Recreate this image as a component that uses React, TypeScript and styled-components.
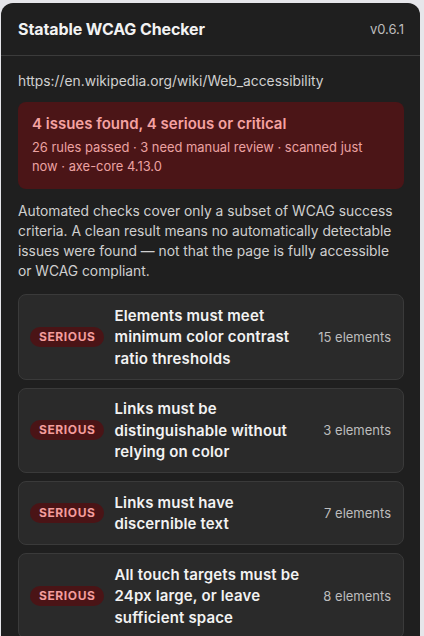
import React from 'react';
import styled, { createGlobalStyle } from 'styled-components';

interface IIssue {
  id: string;
  impact: string;
  title: string;
  count: number;
}

const issues: IIssue[] = [
  { id: 'color-contrast', impact: 'serious', title: 'Elements must meet minimum color contrast ratio thresholds', count: 15 },
  { id: 'link-in-text-block', impact: 'serious', title: 'Links must be distinguishable without relying on color', count: 3 },
  { id: 'link-name', impact: 'serious', title: 'Links must have discernible text', count: 7 },
  { id: 'target-size', impact: 'serious', title: 'All touch targets must be 24px large, or leave sufficient space', count: 8 },
];

const GlobalStyle = createGlobalStyle`
  html, body {
    margin: 0;
    background: #e6e6ea;
  }
  body {
    padding: 3px 4px 0 1px;
    font-family: Inter, "Noto Sans", "Liberation Sans", sans-serif;
    -webkit-font-smoothing: antialiased;
  }
`;

const Panel = styled.div`
  width: 419px;
  min-height: 660px;
  box-sizing: border-box;
  background: #1f1f1f;
  border-radius: 12px 12px 0 0;
  color: #f2f2f2;
  overflow: hidden;
`;

const Header = styled.header`
  display: flex;
  justify-content: space-between;
  align-items: center;
  height: 53px;
  padding: 0 16px 0 17px;
  border-bottom: 1px solid #3b3b3b;
  box-sizing: border-box;

  h1 {
    margin: 0;
    font-size: 16px;
    font-weight: 700;
    letter-spacing: -0.1px;
  }
`;

const Version = styled.span`
  font-size: 13px;
  color: #bdbdbd;
`;

const Body = styled.main`
  display: flex;
  flex-direction: column;
  gap: 12px;
  padding: 16px 16px 0 17px;
`;

const Url = styled.div`
  font-size: 13.8px;
  line-height: 18px;
  color: #d0d0d0;
`;

const Summary = styled.section`
  background: #4b1517;
  border-radius: 8px;
  padding: 12px 14px 13px 14px;

  .summary-title {
    font-size: 15px;
    font-weight: 600;
    line-height: 20px;
    color: #f5a2a2;
    margin-bottom: 4px;
  }

  .summary-meta {
    font-size: 12.9px;
    line-height: 19px;
    color: #eba2a2;
  }
`;

const Disclaimer = styled.p`
  margin: 0;
  font-size: 13.8px;
  line-height: 20px;
  color: #cfcfcf;
`;

const IssueList = styled.div`
  display: flex;
  flex-direction: column;
  gap: 8px;
  margin-top: 1px;
`;

const IssueCard = styled.div`
  display: flex;
  align-items: center;
  gap: 10px;
  padding: 9.5px 12px 9.5px 11px;
  background: #2a2a2a;
  border: 1px solid #3a3a3a;
  border-radius: 8px;
`;

const Badge = styled.span<{ $impact: string }>`
  flex-shrink: 0;
  padding: 0 9px;
  height: 20px;
  line-height: 20px;
  border-radius: 10px;
  background: ${({ $impact }) => ($impact === 'critical' ? '#5a1010' : '#4a1416')};
  color: #f49d9d;
  font-size: 12px;
  font-weight: 700;
  letter-spacing: 0.6px;
  text-transform: uppercase;
`;

const IssueTitle = styled.div`
  flex: 1;
  font-size: 15px;
  font-weight: 600;
  letter-spacing: 0.15px;
  line-height: 21.5px;
  color: #f2f2f2;
`;

const Count = styled.span`
  flex-shrink: 0;
  font-size: 13px;
  color: #bdbdbd;
`;

export default function App() {
  return (
    <>
      <GlobalStyle />
      <Panel>
        <Header>
          <h1>Statable WCAG Checker</h1>
          <Version>v0.6.1</Version>
        </Header>
        <Body>
          <Url>https://en.wikipedia.org/wiki/Web_accessibility</Url>
          <Summary>
            <div className="summary-title">4 issues found, 4 serious or critical</div>
            <div className="summary-meta">
              26 rules passed · 3 need manual review · scanned just now · axe-core 4.13.0
            </div>
          </Summary>
          <Disclaimer>
            Automated checks cover only a subset of WCAG success criteria. A clean result means no
            automatically detectable issues were found — not that the page is fully accessible or
            WCAG compliant.
          </Disclaimer>
          <IssueList>
            {issues.map((issue) => (
              <IssueCard key={issue.id}>
                <Badge $impact={issue.impact}>{issue.impact}</Badge>
                <IssueTitle>{issue.title}</IssueTitle>
                <Count>{issue.count} elements</Count>
              </IssueCard>
            ))}
          </IssueList>
        </Body>
      </Panel>
    </>
  );
}
